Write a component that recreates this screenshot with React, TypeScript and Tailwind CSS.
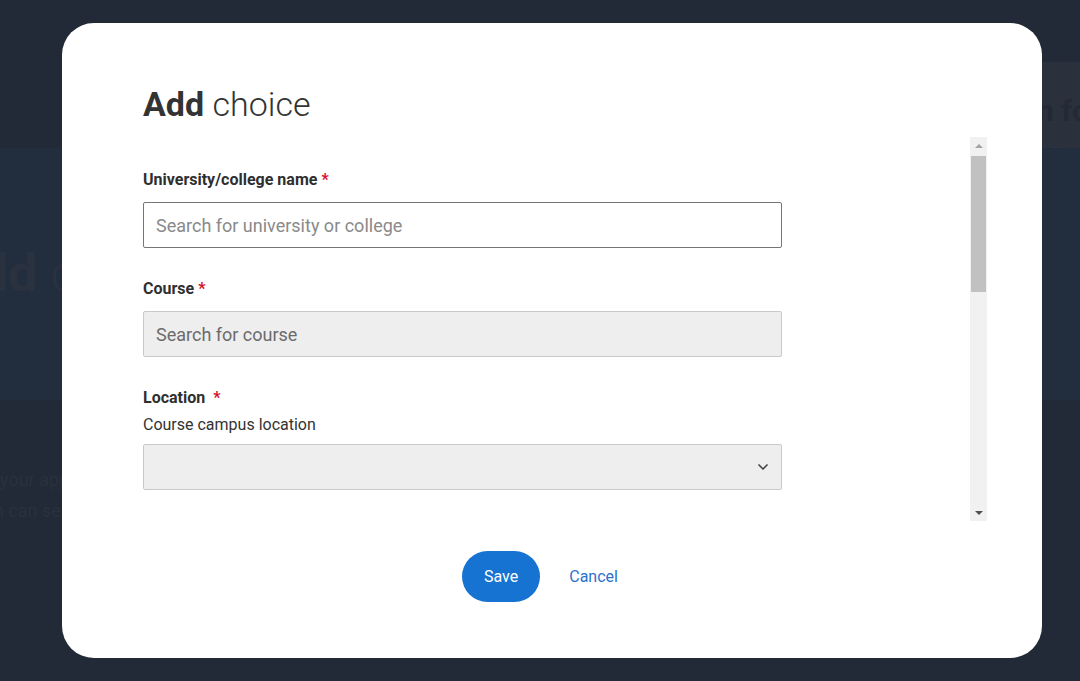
import { ChevronDown } from 'lucide-react';

function Field({ label, required, hint, children, spaced }: { label: string; required?: boolean; hint?: string; children: React.ReactNode; spaced?: boolean }) {
  return (
    <div className="flex flex-col">
      <label className="text-[16px] leading-6 font-bold text-[#2f2f2f]">
        {label}
        {required && <span className={`text-[#d40f2a] font-bold ${spaced ? 'ml-2' : 'ml-1'}`}>*</span>}
      </label>
      {hint && <p className="mt-[3px] text-[16px] leading-6 text-[#333]">{hint}</p>}
      <div className={hint ? 'mt-[7px]' : 'mt-[10px]'}>{children}</div>
    </div>
  );
}

function FakeScrollbar() {
  return (
    <div className="w-[17px] h-full bg-[#f1f1f1] flex flex-col items-center">
      <div className="h-[17px] flex items-center justify-center">
        <div className="w-0 h-0 border-l-[4px] border-r-[4px] border-b-[4px] border-l-transparent border-r-transparent border-b-[#a3a3a3]" />
      </div>
      <div className="w-[15px] h-[136px] mt-[2px] bg-[#c1c1c1]" />
      <div className="flex-1" />
      <div className="h-[17px] flex items-center justify-center">
        <div className="w-0 h-0 border-l-[4px] border-r-[4px] border-t-[4px] border-l-transparent border-r-transparent border-t-[#505050]" />
      </div>
    </div>
  );
}

export default function App() {
  return (
    <div className="relative w-[1080px] h-[681px] overflow-hidden bg-[#212a36]" style={{ fontFamily: 'Roboto, "Open Sans", sans-serif' }}>
      {/* page behind the overlay */}
      <div className="flex flex-col h-full">
        <div className="flex justify-end mt-[62px] h-[86px]">
          <div className="w-[60px] bg-[#2a303c] h-[126px] pt-[26px] overflow-hidden whitespace-nowrap">
            <p className="text-[30px] font-bold text-[#242a35]">on for</p>
            <p className="text-[16px] text-[#2c3746] mt-[6px] -ml-[10px]">courses</p>
          </div>
        </div>
        <div className="h-[252px] bg-[#222d3e] flex items-center overflow-hidden whitespace-nowrap">
          <p className="text-[52px] font-bold text-[#2a3240] -ml-[56px]">Add <span className="font-light">choice</span></p>
        </div>
        <div className="mt-[66px] flex flex-col gap-[4px] whitespace-nowrap overflow-hidden text-[18px] leading-[27px] text-[#29313e]">
          <p className="ml-0">your application</p>
          <p className="-ml-[6px]">n can search</p>
        </div>
      </div>

      {/* modal overlay */}
      <div className="absolute inset-0 flex items-center">
        <div className="ml-[62px] w-[980px] h-[635px] bg-white rounded-[32px] flex flex-col pt-[81px] pb-[56px]">
          <h2 className="pl-[81px] text-[34px] leading-[44px] text-[#333] -mt-[22px]">
            <span className="font-bold">Add</span> <span className="font-light">choice</span>
          </h2>
          <div className="mt-[11px] flex h-[384px] pl-[81px] pr-[55px]">
            <div className="flex-1 overflow-hidden pt-[31px] flex flex-col gap-[29px]">
              <Field label="University/college name" required>
                <div className="w-[639px] h-[46px] border border-[#767676] rounded-[2px] flex items-center px-3 text-[18px] text-[#8a8a8a]">
                  Search for university or college
                </div>
              </Field>
              <Field label="Course" required>
                <div className="w-[639px] h-[46px] border border-[#c9c9c9] bg-[#eeeeee] rounded-[2px] flex items-center px-3 text-[18px] text-[#6b6b6b]">
                  Search for course
                </div>
              </Field>
              <Field label="Location" required spaced hint="Course campus location">
                <div className="w-[639px] h-[46px] border border-[#c9c9c9] bg-[#eeeeee] rounded-[2px] flex items-center justify-end pr-[10px]">
                  <ChevronDown className="w-[16px] h-[16px] text-[#444]" strokeWidth={2.5} />
                </div>
              </Field>
              <Field label="Study mode" required>
                <div className="w-[639px] h-[46px] border border-[#c9c9c9] bg-[#eeeeee] rounded-[2px]" />
              </Field>
            </div>
            <FakeScrollbar />
          </div>
          <div className="mt-[30px] flex justify-center gap-[5px]">
            <button className="h-[51px] px-[22px] rounded-full bg-[#1673d1] text-white text-[16px]">Save</button>
            <button className="h-[51px] px-6 text-[#2a72cc] text-[16px]">Cancel</button>
          </div>
        </div>
      </div>
    </div>
  );
}
